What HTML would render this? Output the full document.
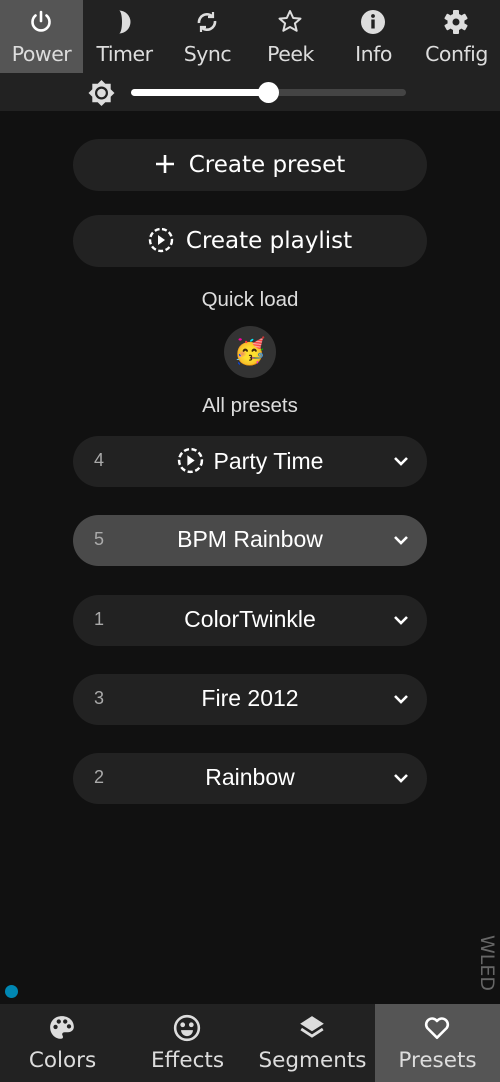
<!DOCTYPE html>
<html><head><meta charset="utf-8"><style>
*{margin:0;padding:0;box-sizing:border-box}
body{width:500px;height:1082px;background:#111;font-family:"DejaVu Sans","Liberation Sans",sans-serif;color:#ddd;position:relative;overflow:hidden}
.top{position:absolute;left:0;top:0;width:500px;height:111px;background:#222}
.tab{position:absolute;top:0;width:83px;height:73px;text-align:center;font-size:20.5px;color:#ddd}
.tab svg{position:absolute;left:28px;top:9px}
.tab span{position:absolute;left:0;right:0;top:42px;letter-spacing:-0.5px}
.btn{position:absolute;left:73px;width:354px;height:52px;border-radius:26px;background:#222;color:#fff;font-size:23px;text-align:center;line-height:52px}
.lbl{position:absolute;left:0;width:500px;text-align:center;font-family:"Liberation Sans",sans-serif;font-size:20.5px;color:#ddd}
.pr{position:absolute;left:73px;width:354px;height:51px;border-radius:26px;background:#222;font-family:"Liberation Sans",sans-serif}
.pr .n{position:absolute;left:21px;top:14px;font-size:18px;color:#aaa}
.pr .t{position:absolute;left:0;right:0;top:11px;text-align:center;font-size:23px;color:#fff}
.pr svg.c{position:absolute;right:18px;top:19px}
.bot{position:absolute;left:0;top:1004px;width:500px;height:78px;background:#222}
.bt{position:absolute;top:0;width:125px;height:78px;text-align:center;font-size:21.5px;color:#ddd}
.bt svg{position:absolute;left:48px;top:10px}
.bt span{position:absolute;left:0;right:0;top:44px}
</style></head><body>
<div class="top">
<div class="tab" style="left:0;background:#555"><svg width="26" height="26" viewBox="0 0 26 26" fill="none" stroke="#fff" stroke-width="2.6" stroke-linecap="round"><path d="M13 3v9"/><path d="M7.5 6.5a8.5 8.5 0 1 0 11 0"/></svg><span>Power</span></div>
<div class="tab" style="left:83px"><svg width="26" height="26" viewBox="0 0 26 26"><path d="M8 1.5A11.5 11.5 0 0 1 8 24.5A3 11.5 0 0 0 8 1.5z" fill="#ddd"/></svg><span>Timer</span></div>
<div class="tab" style="left:166px"><svg width="26" height="26" viewBox="0 0 26 26" fill="none" stroke="#ddd" stroke-width="2.6"><path d="M5 14a8 8 0 0 1 13.5-6.5"/><path d="M21 12a8 8 0 0 1-13.5 6.5"/><path d="M19 3v5h-5M7 23v-5h5" stroke-width="2.2"/></svg><span>Sync</span></div>
<div class="tab" style="left:249px"><svg width="26" height="26" viewBox="0 0 26 26" fill="none" stroke="#ddd" stroke-width="2" stroke-linejoin="round"><path d="M13 2l3.2 7 7.3.6-5.6 4.8 1.8 7.4L13 18l-6.7 3.8 1.8-7.4L2.5 9.6l7.3-.6z"/></svg><span>Peek</span></div>
<div class="tab" style="left:332px"><svg width="26" height="26" viewBox="0 0 26 26"><circle cx="13" cy="13" r="12" fill="#ddd"/><rect x="11.3" y="10.5" width="3.4" height="9" fill="#222"/><circle cx="13" cy="7" r="1.9" fill="#222"/></svg><span>Info</span></div>
<div class="tab" style="left:415px"><svg width="26" height="26" viewBox="0 0 26 26"><g fill="#ddd" transform="translate(13 13)"><circle r="8.5"/><rect x="-3" y="-12" width="6" height="24" rx="1"/><rect x="-3" y="-12" width="6" height="24" rx="1" transform="rotate(60)"/><rect x="-3" y="-12" width="6" height="24" rx="1" transform="rotate(120)"/><circle r="3.5" fill="#222"/></g></svg><span>Config</span></div>
<svg style="position:absolute;left:87px;top:79px" width="29" height="29" viewBox="0 0 29 29"><path d="M14.5 1l3.8 3.8h5.4v5.4l3.8 3.8-3.8 3.8v5.4h-5.4l-3.8 3.8-3.8-3.8H5.3v-5.4L1.5 14l3.8-3.8V4.8h5.4z" fill="#ddd"/><circle cx="14.5" cy="14" r="6.5" fill="#222"/><circle cx="14.5" cy="14" r="4.3" fill="#ddd"/></svg>
<div style="position:absolute;left:131px;top:89px;width:275px;height:7px;border-radius:4px;background:#444"></div>
<div style="position:absolute;left:131px;top:89px;width:140px;height:7px;border-radius:4px;background:#fff"></div>
<div style="position:absolute;left:258px;top:82px;width:21px;height:21px;border-radius:50%;background:#fff"></div>
</div>
<div class="btn" style="top:139px"><svg width="20" height="20" viewBox="0 0 20 20" style="vertical-align:-2px;margin-right:14px" stroke="#fff" stroke-width="2.6"><path d="M10 1v18M1 10h18"/></svg>Create preset</div>
<div class="btn" style="top:215px"><svg width="26" height="26" viewBox="0 0 26 26" style="vertical-align:-5px;margin-right:12px"><circle cx="13" cy="13" r="11" fill="none" stroke="#fff" stroke-width="2.4" stroke-dasharray="5 2.5"/><path d="M10 8l7 5-7 5z" fill="#fff"/></svg>Create playlist</div>
<div class="lbl" style="top:288px">Quick load</div>
<div style="position:absolute;left:224px;top:326px;width:52px;height:52px;border-radius:50%;background:#333;text-align:center;line-height:52px;font-size:26px">🥳</div>
<div class="lbl" style="top:394px">All presets</div>
<div class="pr" style="top:436px"><span class="n">4</span><div class="t"><svg width="27" height="27" viewBox="0 0 26 26" style="vertical-align:-5px;margin-right:10px"><circle cx="13" cy="13" r="11" fill="none" stroke="#fff" stroke-width="2.4" stroke-dasharray="5 2.5"/><path d="M10 8l7 5-7 5z" fill="#fff"/></svg>Party Time</div><svg class="c" width="16" height="12" viewBox="0 0 16 12"><path d="M2 3l6 6 6-6" fill="none" stroke="#fff" stroke-width="2.6"/></svg></div>
<div class="pr" style="top:515px;background:#4a4a4a"><span class="n">5</span><div class="t">BPM Rainbow</div><svg class="c" width="16" height="12" viewBox="0 0 16 12"><path d="M2 3l6 6 6-6" fill="none" stroke="#fff" stroke-width="2.6"/></svg></div>
<div class="pr" style="top:595px"><span class="n">1</span><div class="t">ColorTwinkle</div><svg class="c" width="16" height="12" viewBox="0 0 16 12"><path d="M2 3l6 6 6-6" fill="none" stroke="#fff" stroke-width="2.6"/></svg></div>
<div class="pr" style="top:674px"><span class="n">3</span><div class="t">Fire 2012</div><svg class="c" width="16" height="12" viewBox="0 0 16 12"><path d="M2 3l6 6 6-6" fill="none" stroke="#fff" stroke-width="2.6"/></svg></div>
<div class="pr" style="top:753px"><span class="n">2</span><div class="t">Rainbow</div><svg class="c" width="16" height="12" viewBox="0 0 16 12"><path d="M2 3l6 6 6-6" fill="none" stroke="#fff" stroke-width="2.6"/></svg></div>
<div style="position:absolute;top:935px;left:498px;transform-origin:0 0;transform:rotate(90deg);font-size:19px;color:#666;width:62px;height:26px">WLED</div>
<div style="position:absolute;left:5px;top:985px;width:13px;height:13px;border-radius:50%;background:#0087b3"></div>
<div class="bot">
<div class="bt" style="left:0"><svg width="28" height="28" viewBox="0 0 26 26"><path d="M13 2C6 2 2 7 2 12.5 2 18 6 23 12 23c2 0 2.3-1.5 1.5-3-.8-1.5 0-3 2-3h3c3 0 5.5-2 5.5-5C24 6 19 2 13 2z" fill="#ddd"/><circle cx="7" cy="12" r="2" fill="#222"/><circle cx="10" cy="7" r="2" fill="#222"/><circle cx="16" cy="7" r="2" fill="#222"/><circle cx="19.5" cy="11.5" r="2" fill="#222"/></svg><span>Colors</span></div>
<div class="bt" style="left:125px"><svg width="28" height="28" viewBox="0 0 26 26" fill="none" stroke="#ddd" stroke-width="2.4"><circle cx="13" cy="13" r="11"/><circle cx="9" cy="10" r="1" fill="#ddd"/><circle cx="17" cy="10" r="1" fill="#ddd"/><path d="M7.5 15h11a5.5 5.5 0 0 1-11 0z" fill="#ddd" stroke="none"/></svg><span>Effects</span></div>
<div class="bt" style="left:250px"><svg width="28" height="28" viewBox="0 0 26 26"><path d="M13 2l11 7-11 7-11-7z" fill="#ddd"/><path d="M3 14l10 6.5 10-6.5" fill="none" stroke="#ddd" stroke-width="2.6"/></svg><span>Segments</span></div>
<div class="bt" style="left:375px;background:#555"><svg width="28" height="28" viewBox="0 0 26 26"><path d="M13 22L4 13a5.5 5.5 0 0 1 9-6.5 5.5 5.5 0 0 1 9 6.5z" fill="none" stroke="#fff" stroke-width="2.4" stroke-linejoin="round"/></svg><span>Presets</span></div>
</div>
</body></html>
